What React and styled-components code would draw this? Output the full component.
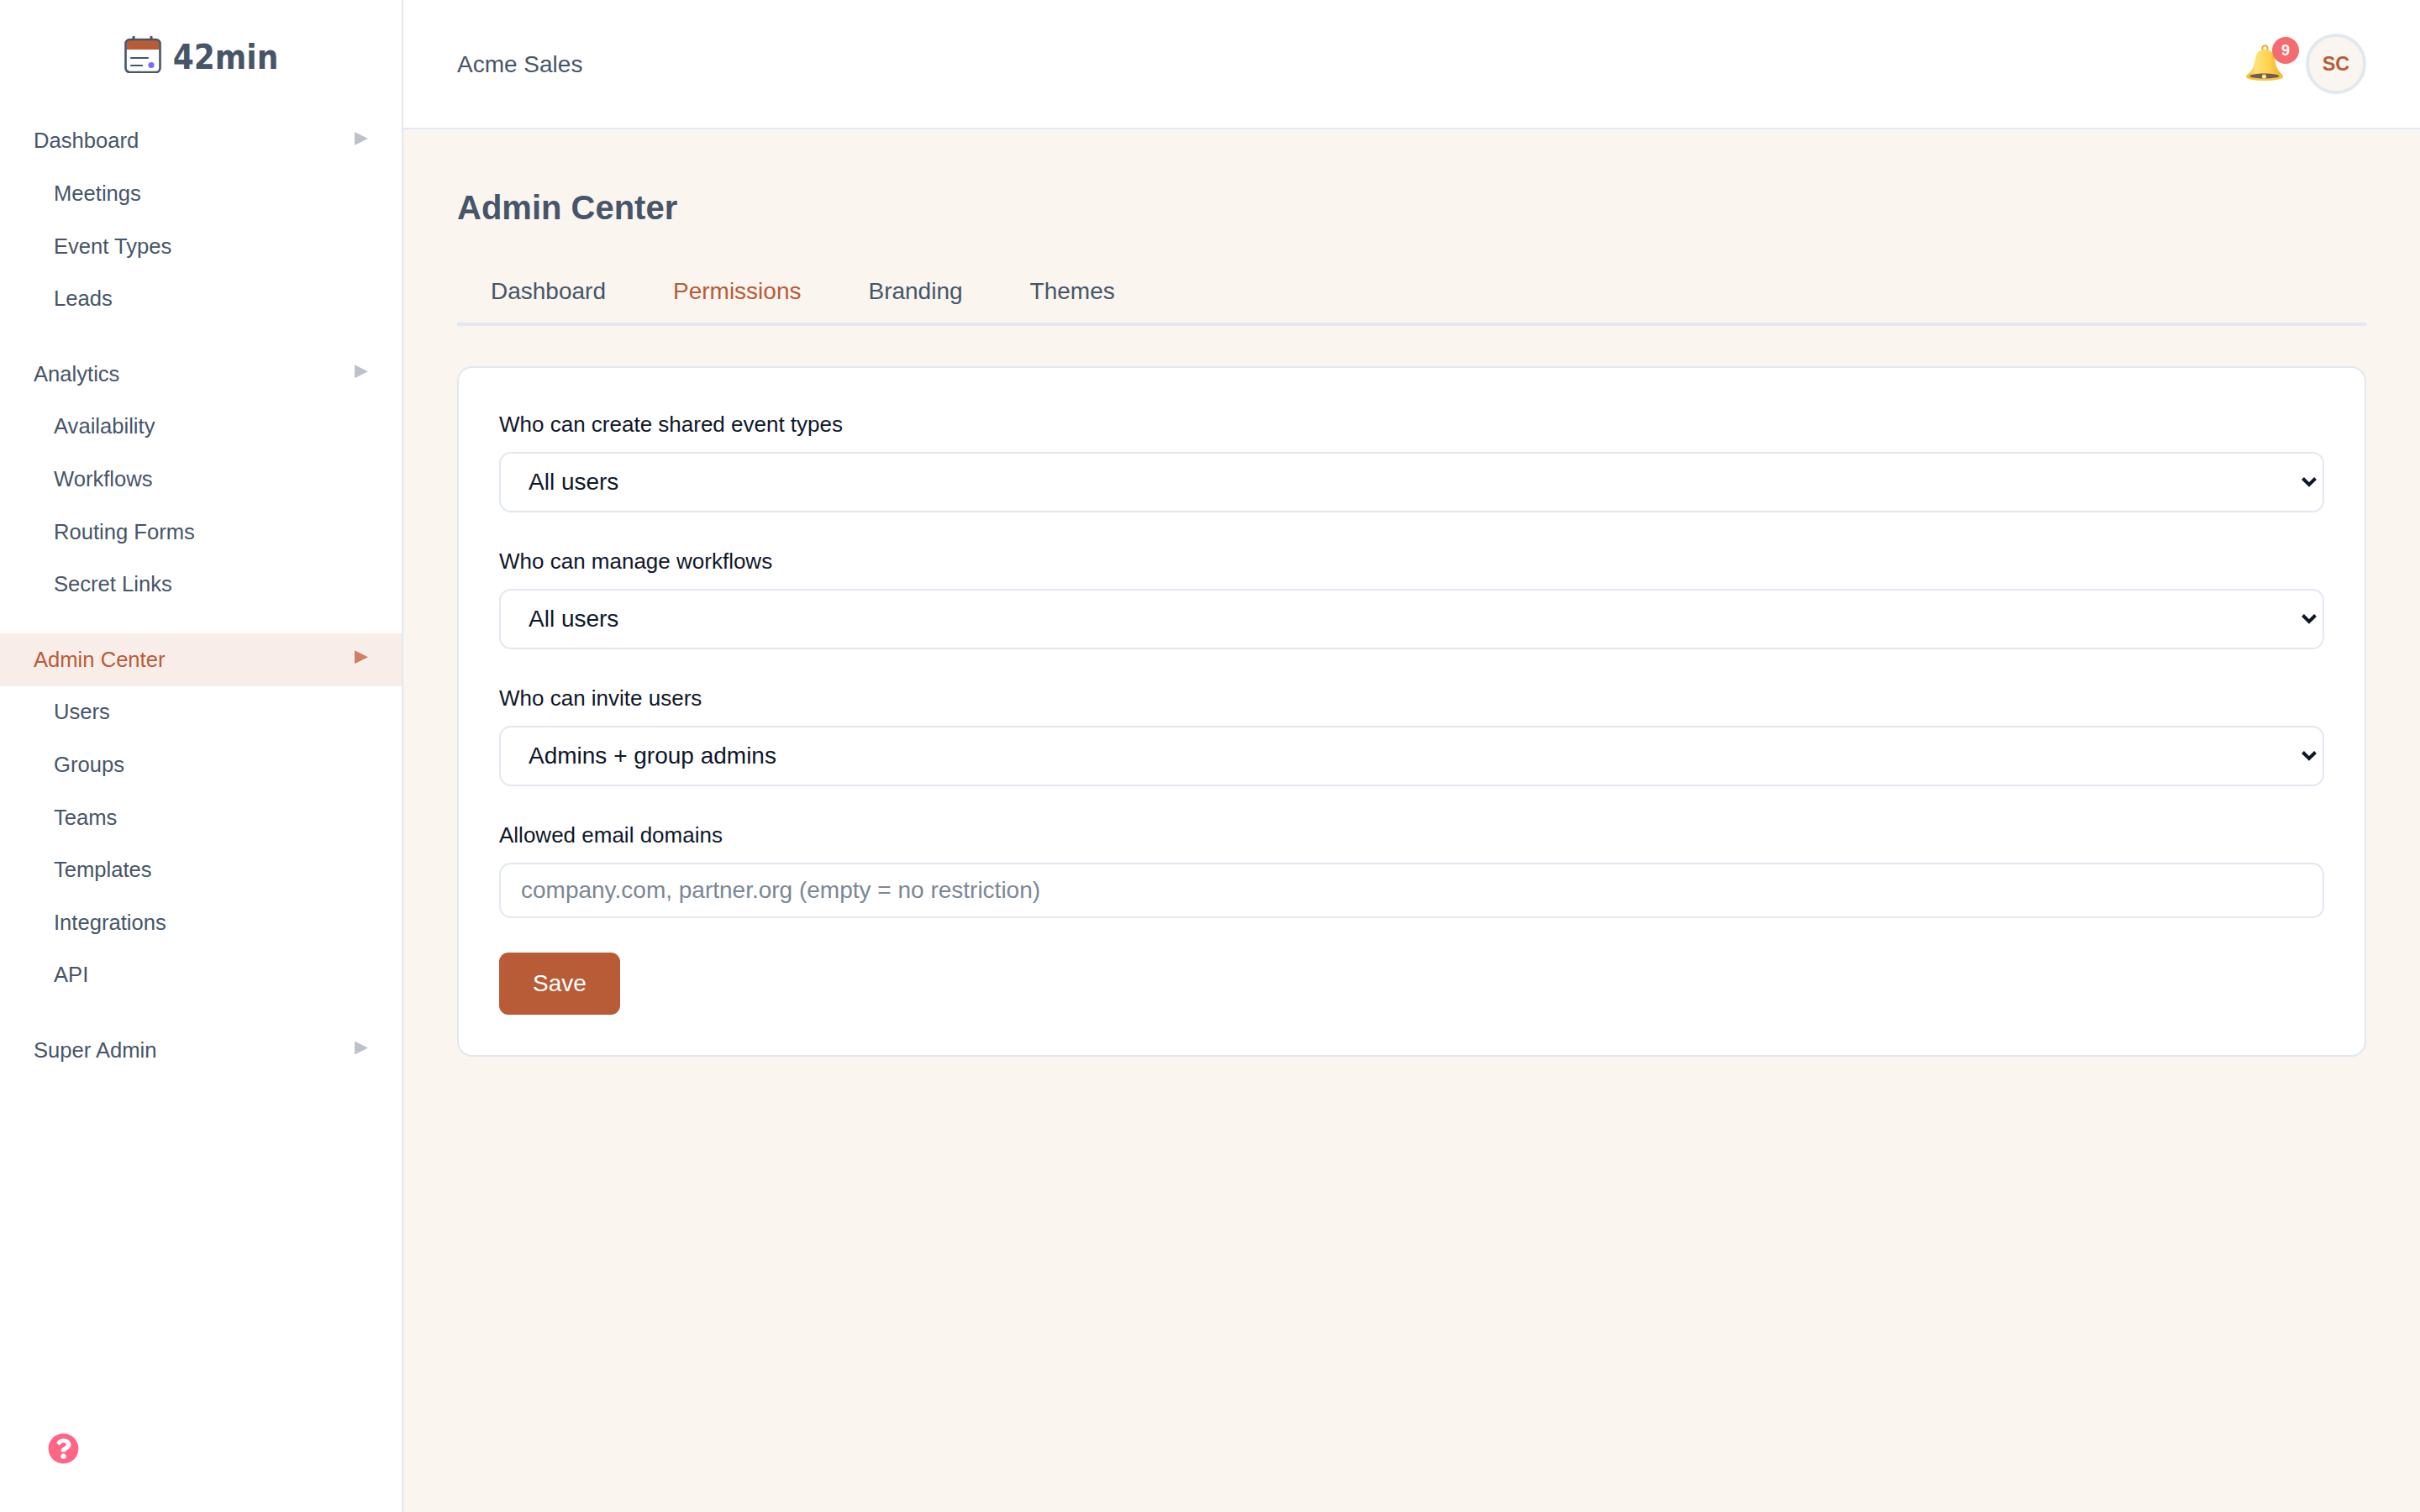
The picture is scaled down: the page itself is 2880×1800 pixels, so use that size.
import React from "react";
import styled, { createGlobalStyle } from "styled-components";
import { FaQuestionCircle } from "react-icons/fa";

const GlobalStyle = createGlobalStyle`
  html, body {
    margin: 0;
    padding: 0;
    height: 100%;
    font-family: "Liberation Sans", Arial, sans-serif;
    background: #faf5ef;
  }
  * { box-sizing: border-box; }
`;

const Layout = styled.div`
  display: grid;
  grid-template-columns: 480px 1fr;
  height: 100vh;
  overflow: hidden;
`;

const Sidebar = styled.aside`
  display: flex;
  flex-direction: column;
  background: #fff;
  border-right: 2px solid #e2e8f0;
`;

const LogoRow = styled.div`
  display: flex;
  align-items: center;
  justify-content: center;
  gap: 14px;
  height: 136.6px;
  padding: 0 0 6px 1px;
  flex-shrink: 0;
`;

const LogoText = styled.span`
  margin-top: 6px;
  font-family: "DejaVu Sans Condensed", "DejaVu Sans", sans-serif;
  font-stretch: condensed;
  font-weight: 700;
  font-size: 40px;
  line-height: 1;
  color: #475569;
`;

const NavGroup = styled.div`
  margin-bottom: 27px;
`;

const NavHead = styled.div`
  display: flex;
  align-items: center;
  justify-content: space-between;
  height: 62.6px;
  padding: 0 40px;
  font-size: 25.6px;
  color: ${p => (p.$active ? "#b85c38" : "#475569")};
  background: ${p => (p.$active ? "#f8ede8" : "transparent")};
`;

const Caret = styled.span`
  width: 16px;
  height: 16px;
  margin-bottom: 6px;
  background: ${p => (p.$active ? "#cf8063" : "#bdc2ca")};
  clip-path: polygon(0 0, 100% 50%, 0 100%);
`;

const NavItem = styled.div`
  display: flex;
  align-items: center;
  height: 62.6px;
  padding-left: 64px;
  font-size: 25.6px;
  color: #475569;
`;

const HelpButton = styled.div`
  display: flex;
  margin: auto 0 57px 57px;
  color: #ff6584;
`;

const Main = styled.div`
  display: flex;
  flex-direction: column;
  min-width: 0;
`;

const Header = styled.header`
  display: flex;
  align-items: center;
  justify-content: space-between;
  height: 154px;
  flex-shrink: 0;
  padding: 0 64px;
  background: #fff;
  border-bottom: 2px solid #e2e8f0;
`;

const OrgName = styled.div`
  padding-top: 1px;
  font-size: 28px;
  color: #475569;
`;

const HeaderRight = styled.div`
  display: flex;
  align-items: center;
  gap: 27px;
`;

const BellWrap = styled.div`
  position: relative;
  display: flex;
  width: 44px;
  height: 44px;
  margin-bottom: 2px;
`;

const Badge = styled.span`
  position: absolute;
  top: -9px;
  left: 31px;
  display: flex;
  align-items: center;
  justify-content: center;
  width: 32px;
  height: 32px;
  border-radius: 50%;
  background: #f56b6f;
  color: #fff;
  font-size: 18px;
  font-weight: 700;
`;

const Avatar = styled.div`
  display: flex;
  align-items: center;
  justify-content: center;
  width: 72px;
  height: 72px;
  border-radius: 50%;
  border: 4px solid #e2e8f0;
  background: #faf5ef;
  color: #b85c38;
  font-size: 23.4px;
  font-weight: 700;
`;

const Content = styled.main`
  padding: 70px 64px 0;
`;

const Title = styled.h1`
  margin: 0;
  font-size: 40px;
  line-height: 46px;
  font-weight: 700;
  color: #475569;
`;

const TabBar = styled.div`
  display: flex;
  margin-top: 40px;
  border-bottom: 4px solid #e2e8f0;
`;

const Tab = styled.div`
  display: flex;
  align-items: center;
  height: 74px;
  padding: 0 40px;
  font-size: 28px;
  color: ${p => (p.$active ? "#b85c38" : "#475569")};
`;

const Card = styled.section`
  margin-top: 48px;
  padding: 48px;
  background: #fff;
  border: 2px solid #e2e8f0;
  border-radius: 18px;
`;

const Field = styled.div`
  margin-bottom: ${p => p.$gap || 39.6}px;
`;

const Label = styled.label`
  display: block;
  margin-bottom: 14px;
  font-size: 26px;
  line-height: 38px;
  color: #0f172a;
`;

const SelectWrap = styled.div`
  position: relative;
`;

const Select = styled.select`
  appearance: none;
  display: block;
  width: 100%;
  height: 71.5px;
  padding: 0 33px;
  font-family: inherit;
  font-size: 28px;
  color: #0f172a;
  background: #fff;
  border: 2px solid #e2e8f0;
  border-radius: 14px;
`;

const Chevron = styled.svg`
  position: absolute;
  top: 29px;
  right: 8px;
  pointer-events: none;
`;

const Input = styled.input`
  display: block;
  width: 100%;
  height: 66px;
  padding: 0 24px;
  font-family: inherit;
  font-size: 28px;
  color: #0f172a;
  background: #fff;
  border: 2px solid #e2e8f0;
  border-radius: 14px;

  &::placeholder {
    color: #7b8794;
    opacity: 1;
  }
`;

const SaveButton = styled.button`
  display: block;
  width: 144px;
  height: 74px;
  padding: 0;
  font-family: inherit;
  font-size: 28px;
  color: #fff;
  background: #b85c38;
  border: none;
  border-radius: 11px;
`;

const sections = [
  { head: "Dashboard", items: ["Meetings", "Event Types", "Leads"] },
  { head: "Analytics", items: ["Availability", "Workflows", "Routing Forms", "Secret Links"] },
  { head: "Admin Center", active: true, items: ["Users", "Groups", "Teams", "Templates", "Integrations", "API"] },
  { head: "Super Admin", items: [] },
];

const tabs = ["Dashboard", "Permissions", "Branding", "Themes"];

const selects = [
  { label: "Who can create shared event types", value: "All users" },
  { label: "Who can manage workflows", value: "All users" },
  { label: "Who can invite users", value: "Admins + group admins" },
];

const LogoIcon = () => (
  <svg width="44" height="44" viewBox="0 0 44 44" fill="none">
    <path d="M11 1v4M32 1v4" stroke="#475569" strokeWidth="3" strokeLinecap="round" />
    <path d="M2.5 16V8a4 4 0 0 1 4-4h31a4 4 0 0 1 4 4v8z" fill="#b85c38" />
    <rect x="1.5" y="4" width="41" height="39" rx="5" stroke="#475569" strokeWidth="2.6" />
    <path d="M8 26h20M8 35h13" stroke="#475569" strokeWidth="2.2" strokeLinecap="round" />
    <circle cx="32" cy="34.5" r="3.6" fill="#7c6cf6" />
  </svg>
);

const BellIcon = () => (
  <svg width="44" height="44" viewBox="0 0 44 44">
    <defs>
      <linearGradient id="bellBody" x1="0" y1="0" x2="1" y2="0">
        <stop offset="0" stopColor="#f2b632" />
        <stop offset="0.25" stopColor="#ffe27a" />
        <stop offset="0.6" stopColor="#fdd34f" />
        <stop offset="1" stopColor="#eeaa27" />
      </linearGradient>
    </defs>
    <circle cx="22.5" cy="4.5" r="3.2" fill="none" stroke="#e9ac2c" strokeWidth="2" />
    <path d="M22.5 6C14 6 11.5 12 10.5 19C9.5 27 7 31 1 36.5C0 38 1 40 3 40.5H42C44 40 44.5 38 43.5 36.5C38 31 35.5 27 34.5 19C33.5 12 31 6 22.5 6Z" fill="url(#bellBody)" />
    <ellipse cx="22" cy="38.5" rx="22" ry="4.5" fill="#f7c437" />
    <ellipse cx="22" cy="37.5" rx="17.5" ry="3" fill="#6f5b57" />
    <circle cx="21.5" cy="38" r="2.6" fill="#ffe98f" />
  </svg>
);

const App = () => {
  return (
    <>
      <GlobalStyle />
      <Layout>
        <Sidebar>
          <LogoRow>
            <LogoIcon />
            <LogoText>42min</LogoText>
          </LogoRow>
          {sections.map(section => (
            <NavGroup key={section.head}>
              <NavHead $active={section.active}>
                {section.head}
                <Caret $active={section.active} />
              </NavHead>
              {section.items.map(item => (
                <NavItem key={item}>{item}</NavItem>
              ))}
            </NavGroup>
          ))}
          <HelpButton>
            <FaQuestionCircle size={37} />
          </HelpButton>
        </Sidebar>
        <Main>
          <Header>
            <OrgName>Acme Sales</OrgName>
            <HeaderRight>
              <BellWrap>
                <BellIcon />
                <Badge>9</Badge>
              </BellWrap>
              <Avatar>SC</Avatar>
            </HeaderRight>
          </Header>
          <Content>
            <Title>Admin Center</Title>
            <TabBar>
              {tabs.map(tab => (
                <Tab key={tab} $active={tab === "Permissions"}>{tab}</Tab>
              ))}
            </TabBar>
            <Card>
              {selects.map(field => (
                <Field key={field.label}>
                  <Label>{field.label}</Label>
                  <SelectWrap>
                    <Select defaultValue={field.value}>
                      <option>All users</option>
                      <option>Admins + group admins</option>
                      <option>Admins only</option>
                    </Select>
                    <Chevron width="20" height="14" viewBox="0 0 20 14" fill="none">
                      <path d="M2.5 2.5L10 10L17.5 2.5" stroke="#0f172a" strokeWidth="4" />
                    </Chevron>
                  </SelectWrap>
                </Field>
              ))}
              <Field $gap={41}>
                <Label>Allowed email domains</Label>
                <Input placeholder="company.com, partner.org (empty = no restriction)" />
              </Field>
              <SaveButton>Save</SaveButton>
            </Card>
          </Content>
        </Main>
      </Layout>
    </>
  );
};

export default App;
